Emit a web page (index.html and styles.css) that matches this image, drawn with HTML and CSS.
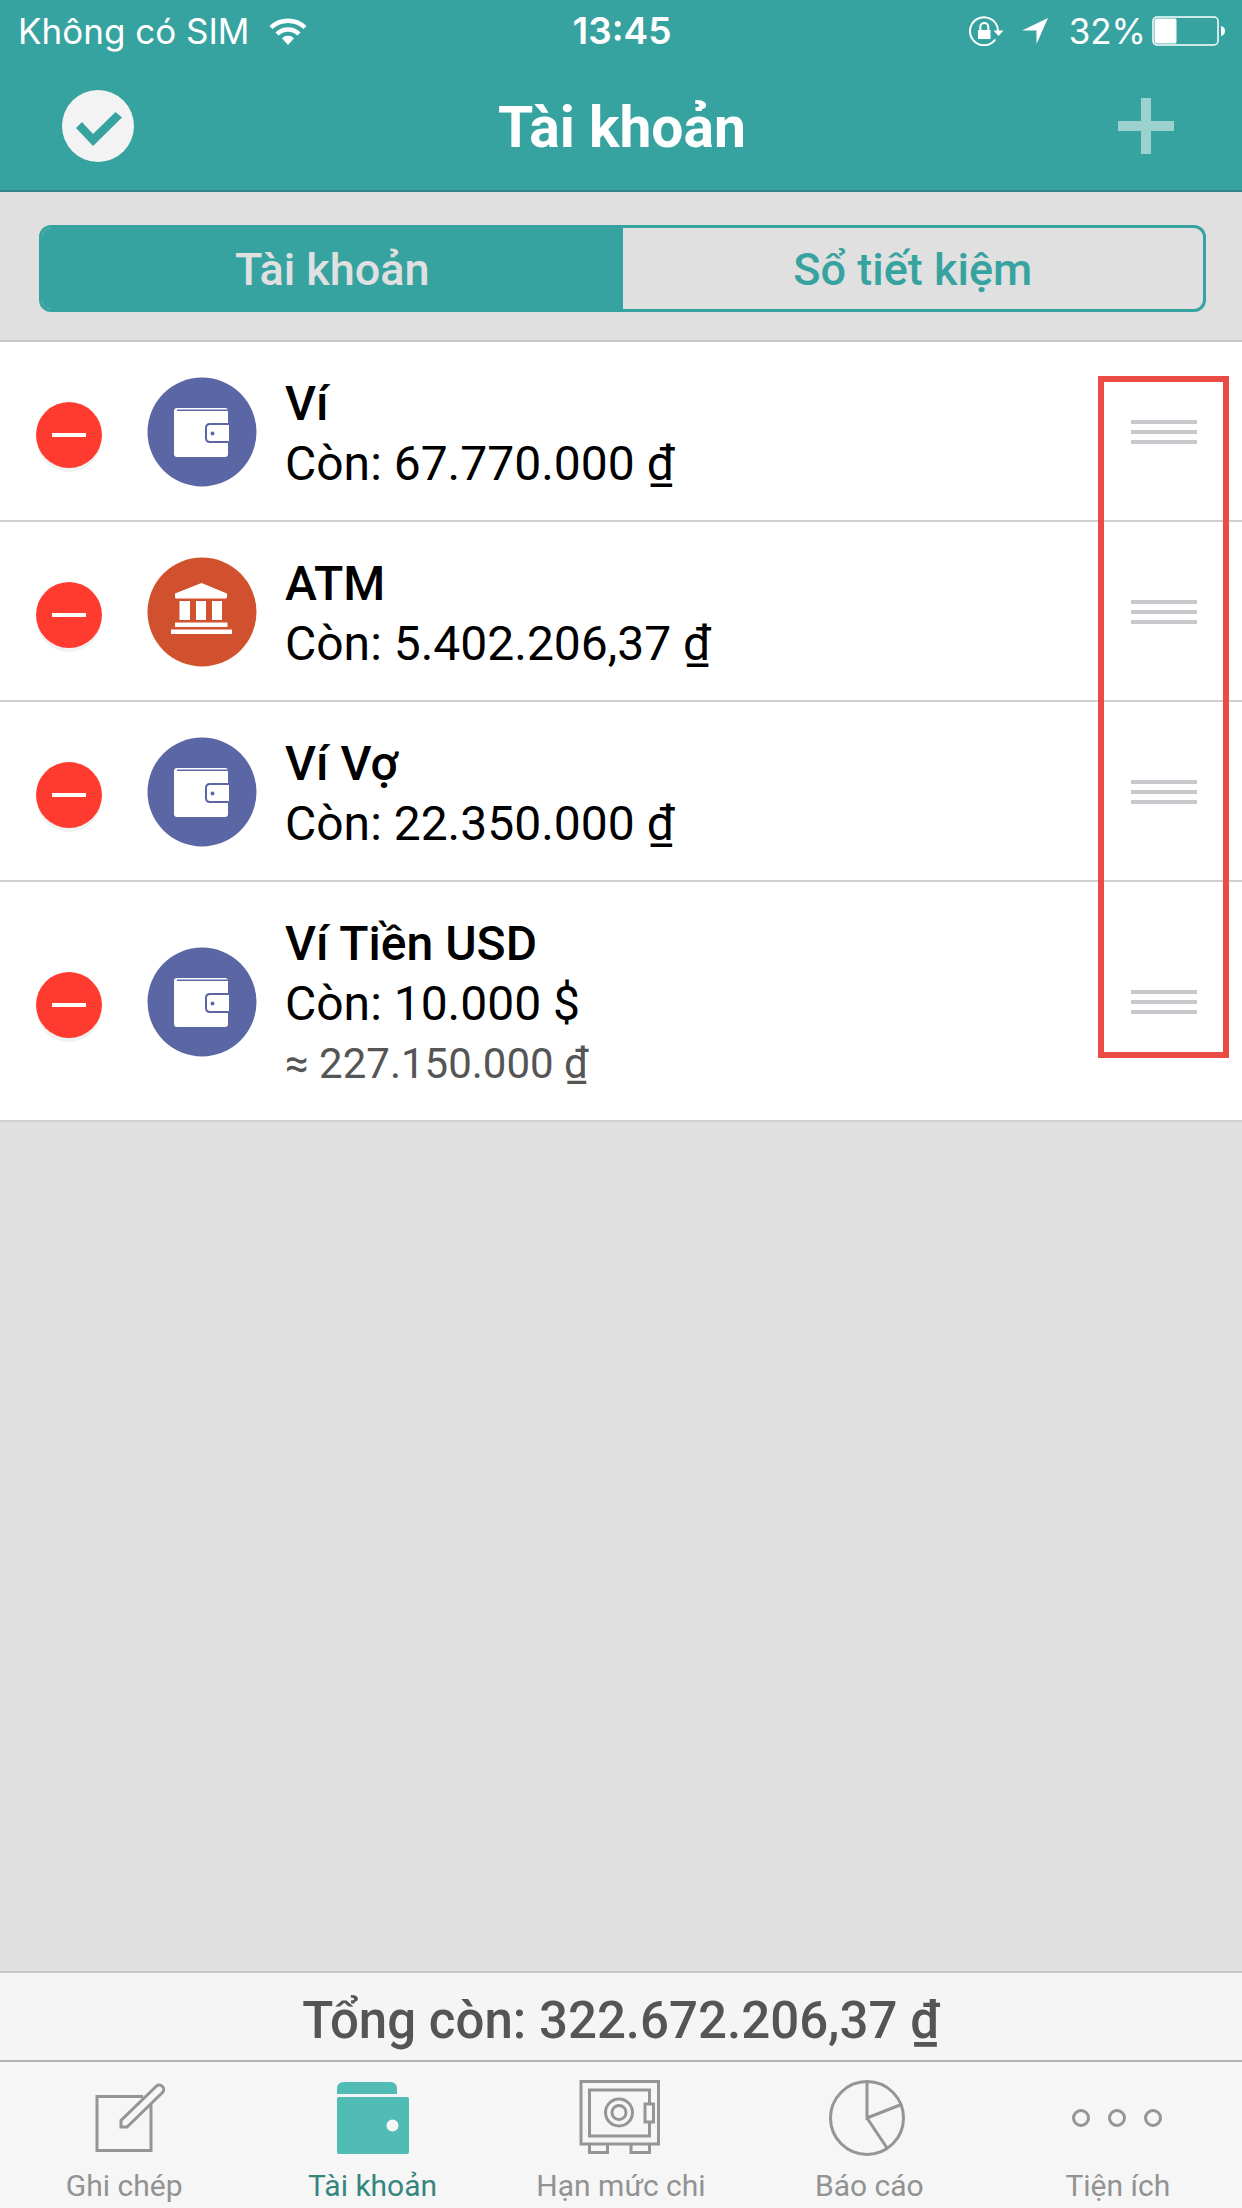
FILE: index.html
```html
<!DOCTYPE html>
<html lang="vi">
<head>
<meta charset="utf-8">
<meta name="viewport" content="width=device-width, initial-scale=1">
<title>Tài khoản</title>
<link rel="stylesheet" href="styles.css">
</head>
<body>
<svg class="defs" aria-hidden="true">
  <symbol id="wallet" viewBox="0 0 110 110">
    <circle cx="55" cy="55" r="54.500" fill="#5b66a4"/>
    <rect x="27" y="31" width="54" height="49" rx="3" fill="#fff"/>
    <path d="M30 33.200H81" stroke="#5b66a4" stroke-width="1.600"/>
    <path d="M83 47H63q-4 0-4 4v10q0 4 4 4h20" fill="#fff" stroke="#5b66a4" stroke-width="2"/>
    <rect x="82" y="45" width="4" height="22" fill="#5b66a4"/>
    <circle cx="65.500" cy="56.500" r="2" fill="#5b66a4"/>
  </symbol>
  <symbol id="bank" viewBox="0 0 110 110">
    <circle cx="55" cy="55" r="54.500" fill="#d1512e"/>
    <path d="M54.500 26L80 36.500V40q0 1.500-1.500 1.500h-49Q28 41.500 28 40v-3.500zM32.500 44H43v19H32.500zM49 44h10v19H49zM65 44h10v19H65zM28 65.500h52.500V70H28zM24 72.500h61V77H24z" fill="#fff"/>
  </symbol>
</svg>

<header class="header">
  <div class="status">
    <div class="status-side">
      <span>Không có SIM</span>
      <svg class="wifi" viewBox="0 0 38 28" aria-hidden="true">
        <g fill="none" stroke="#fff" stroke-width="4.500"><path d="M2 10.500a24.500 24.500 0 0 1 34 0"/><path d="M8 17a15.500 15.500 0 0 1 22 0"/></g>
        <path d="M19 28l-6-6.800a8.600 8.600 0 0 1 12 0z" fill="#fff"/>
      </svg>
    </div>
    <time class="clock">13:45</time>
    <div class="status-side status-right">
      <svg class="lock" viewBox="0 0 36 30" aria-hidden="true">
        <path d="M26.300 23.500A14 14 0 1 1 29 15" fill="none" stroke="#fff" stroke-width="2"/>
        <path d="M24.500 14.500h10L29.500 20z" fill="#fff"/>
        <path d="M9 14h12.500v9H9z" fill="#fff"/>
        <path d="M11.300 14v-3a4 4 0 0 1 8 0v3" fill="none" stroke="#fff" stroke-width="2"/>
      </svg>
      <svg class="arrow" viewBox="0 0 28 28" aria-hidden="true"><path d="M27 1L15.500 27V13.500H1z" fill="#fff"/></svg>
      <span class="percent">32%</span>
      <svg class="battery" viewBox="0 0 74 30" aria-hidden="true">
        <rect x="1" y="1" width="65" height="28" rx="4" fill="none" stroke="#fff" stroke-width="1.500"/>
        <rect x="2.500" y="2.500" width="22" height="25" rx="1.500" fill="#fff"/>
        <path d="M69 10q4 1 4 5t-4 5z" fill="#fff"/>
      </svg>
    </div>
  </div>
  <div class="navbar">
    <button class="icon-button" type="button" aria-label="Xong">
      <svg viewBox="0 0 72 72" width="72" height="72" aria-hidden="true"><circle cx="36" cy="36" r="36" fill="#f3f3f3"/><path d="M14 38l6-6 11 12 22.500-22 6.500 5.500L31 56z" fill="#37a3a0"/></svg>
    </button>
    <h1 class="title">Tài khoản</h1>
    <button class="icon-button add" type="button" aria-label="Thêm">
      <svg viewBox="0 0 72 72" width="72" height="72" aria-hidden="true"><path d="M31 8h10v23h23v10H41v23H31V41H8V31h23z" fill="#9bd1cf"/></svg>
    </button>
  </div>
</header>

<div class="segment-bar">
  <div class="segments">
    <button class="segment selected" type="button" aria-pressed="true">Tài khoản</button>
    <button class="segment" type="button" aria-pressed="false">Sổ tiết kiệm</button>
  </div>
</div>

<main class="content">
  <div class="accounts">
    <ul class="list">
      <li class="row">
        <button class="delete" type="button" aria-label="Xóa Ví"></button>
        <svg class="avatar" aria-hidden="true"><use href="#wallet"/></svg>
        <div class="info"><div class="name">Ví</div><div class="balance">Còn: 67.770.000 ₫</div></div>
        <button class="handle" type="button" aria-label="Sắp xếp Ví"><i></i><i></i><i></i></button>
      </li>
      <li class="row">
        <button class="delete" type="button" aria-label="Xóa ATM"></button>
        <svg class="avatar" aria-hidden="true"><use href="#bank"/></svg>
        <div class="info"><div class="name">ATM</div><div class="balance">Còn: 5.402.206,37 ₫</div></div>
        <button class="handle" type="button" aria-label="Sắp xếp ATM"><i></i><i></i><i></i></button>
      </li>
      <li class="row">
        <button class="delete" type="button" aria-label="Xóa Ví Vợ"></button>
        <svg class="avatar" aria-hidden="true"><use href="#wallet"/></svg>
        <div class="info"><div class="name">Ví Vợ</div><div class="balance">Còn: 22.350.000 ₫</div></div>
        <button class="handle" type="button" aria-label="Sắp xếp Ví Vợ"><i></i><i></i><i></i></button>
      </li>
      <li class="row">
        <button class="delete" type="button" aria-label="Xóa Ví Tiền USD"></button>
        <svg class="avatar" aria-hidden="true"><use href="#wallet"/></svg>
        <div class="info"><div class="name">Ví Tiền USD</div><div class="balance">Còn: 10.000 $</div><div class="converted">≈ 227.150.000 ₫</div></div>
        <button class="handle" type="button" aria-label="Sắp xếp Ví Tiền USD"><i></i><i></i><i></i></button>
      </li>
    </ul>
    <div class="highlight"></div>
  </div>
</main>

<div class="total">Tổng còn: 322.672.206,37 ₫</div>

<nav class="tabs">
  <a class="tab" href="#ghi-chep">
    <svg class="tab-icon" viewBox="0 0 80 80" aria-hidden="true"><path d="M59 18.500H13v54h54V27"/><path d="M37 49v-6.500L72 8.500a4.200 4.200 0 0 1 6.500 6L43 49z"/></svg>
    <span>Ghi chép</span>
  </a>
  <a class="tab active" href="#tai-khoan" aria-current="page">
    <svg class="tab-icon filled" viewBox="0 0 80 80" aria-hidden="true"><path d="M4 16v-5q0-7 7-7h46q7 0 7 7v5z"/><path fill-rule="evenodd" d="M6 19h68q2 0 2 2v53q0 2-2 2H6q-2 0-2-2V21q0-2 2-2zm53.500 22.500a6 6 0 1 0 0 12 6 6 0 0 0 0-12z"/></svg>
    <span>Tài khoản</span>
  </a>
  <a class="tab" href="#han-muc-chi">
    <svg class="tab-icon" viewBox="0 0 80 80" aria-hidden="true"><path d="M0 3.500h77.500V66H0zM68.500 25.500V12H8.500v46h60V44"/><rect x="64" y="26" width="8.500" height="18"/><circle cx="38" cy="34.500" r="13.500"/><circle cx="38" cy="34.500" r="7"/><path d="M8.500 66v8.500h18V66M50 66v8.500h18.500V66"/></svg>
    <span>Hạn mức chi</span>
  </a>
  <a class="tab" href="#bao-cao">
    <svg class="tab-icon" viewBox="0 0 80 80" aria-hidden="true"><circle cx="38" cy="40" r="36.500"/><path d="M38 3.500V40l33-13M38 40l20 30"/></svg>
    <span>Báo cáo</span>
  </a>
  <a class="tab" href="#tien-ich">
    <svg class="tab-icon" viewBox="0 0 80 80" aria-hidden="true"><circle cx="3" cy="40" r="7.500"/><circle cx="39" cy="40" r="7.500"/><circle cx="75" cy="40" r="7.500"/></svg>
    <span>Tiện ích</span>
  </a>
</nav>
</body>
</html>
```
FILE: styles.css
```css
* {
  box-sizing: border-box;
}

body {
  margin: 0;
  min-height: 100vh;
  display: flex;
  flex-direction: column;
  background: #e0e0e0;
  color: #000;
  font-family: Roboto, "Noto Sans", sans-serif;
}

button {
  margin: 0;
  padding: 0;
  border: 0;
  background: none;
  font: inherit;
  cursor: pointer;
}

svg {
  display: block;
  flex: none;
}

.defs {
  position: absolute;
  width: 0;
  height: 0;
}

/* Header */
.header {
  background: #37a3a0;
  color: #fff;
  border-bottom: 2px solid #2f8688;
}

.status {
  display: grid;
  grid-template-columns: 1fr auto 1fr;
  align-items: center;
  height: 62px;
  padding: 0 16px 0 18px;
  font-family: Inter, "Noto Sans", sans-serif;
  font-size: 35px;
  line-height: 62px;
}

.status-side {
  display: flex;
  align-items: center;
}

.status-right {
  justify-content: flex-end;
}

.clock {
  font-size: 37px;
  font-weight: 600;
}

.wifi {
  width: 38px;
  height: 28px;
  margin-left: 20px;
}

.lock {
  width: 36px;
  height: 30px;
}

.arrow {
  width: 28px;
  height: 28px;
  margin: 0 20px 0 16px;
}

.battery {
  width: 74px;
  height: 30px;
  margin-left: 6px;
}

.navbar {
  display: grid;
  grid-template-columns: 72px 1fr 72px;
  align-items: center;
  height: 128px;
  padding: 0 60px 0 62px;
}

.icon-button {
  width: 72px;
  height: 72px;
}

.title {
  margin: 0;
  padding-top: 4px;
  font-size: 57px;
  font-weight: 700;
  line-height: 72px;
  text-align: center;
}

/* Segmented control */
.segment-bar {
  padding: 33px 36px 28px 39px;
  border-bottom: 2px solid #c6c6c8;
}

.segments {
  display: grid;
  grid-template-columns: 1fr 1fr;
  height: 87px;
  border: 3px solid #37a3a0;
  border-radius: 12px;
  overflow: hidden;
}

.segment {
  padding-top: 2px;
  color: #37a3a0;
  font-size: 45px;
  font-weight: 500;
}

.segment.selected {
  background: #37a3a0;
  color: #e0e0e0;
}

/* Account list */
.content {
  flex: 1;
}

.accounts {
  position: relative;
}

.list {
  margin: 0;
  padding: 0;
  list-style: none;
}

.row {
  display: flex;
  align-items: center;
  padding: 2px 45px 0 36px;
  background: #fff;
  border-bottom: 2px solid #cfcfd1;
}

.delete {
  flex: none;
  width: 66px;
  height: 66px;
  margin: 6px 45px 0 0;
  border-radius: 50%;
  background: linear-gradient(#fff, #fff) center / 34px 4px no-repeat #ff3b30;
  box-shadow: 0 5px 1px -1px #f1f1f1;
}

.avatar {
  width: 110px;
  height: 110px;
  margin-right: 28px;
}

.info {
  flex: 1;
  padding: 30px 0 26px;
  font-size: 48px;
  line-height: 60px;
}

.name {
  font-weight: 500;
}

.converted {
  color: #555;
  font-size: 42px;
}

.handle {
  display: grid;
  gap: 6px;
  width: 66px;
}

.handle i {
  height: 4px;
  background: #c7c7cc;
}

.highlight {
  position: absolute;
  top: 34px;
  right: 13px;
  bottom: 64px;
  width: 131px;
  border: 6px solid #e94b45;
  pointer-events: none;
}

/* Footer */
.total {
  padding: 14px 0 5px;
  border-top: 2px solid #c6c6c6;
  background: #f5f5f5;
  color: #555;
  font-size: 51px;
  font-weight: 500;
  line-height: 68px;
  text-align: center;
}

.tabs {
  display: grid;
  grid-template-columns: repeat(5, 1fr);
  border-top: 2px solid #b2b2b2;
  background: #f6f6f6;
}

.tab {
  display: flex;
  flex-direction: column;
  align-items: center;
  gap: 10px;
  padding: 16px 0 4px;
  color: #929292;
  font-size: 30px;
  line-height: 36px;
  text-decoration: none;
}

.tab.active {
  color: #37857f;
}

.tab-icon {
  width: 80px;
  height: 80px;
  overflow: visible;
  fill: none;
  stroke: #959595;
  stroke-width: 3px;
}

.tab-icon.filled {
  fill: #51bcb6;
  stroke: none;
}
```
